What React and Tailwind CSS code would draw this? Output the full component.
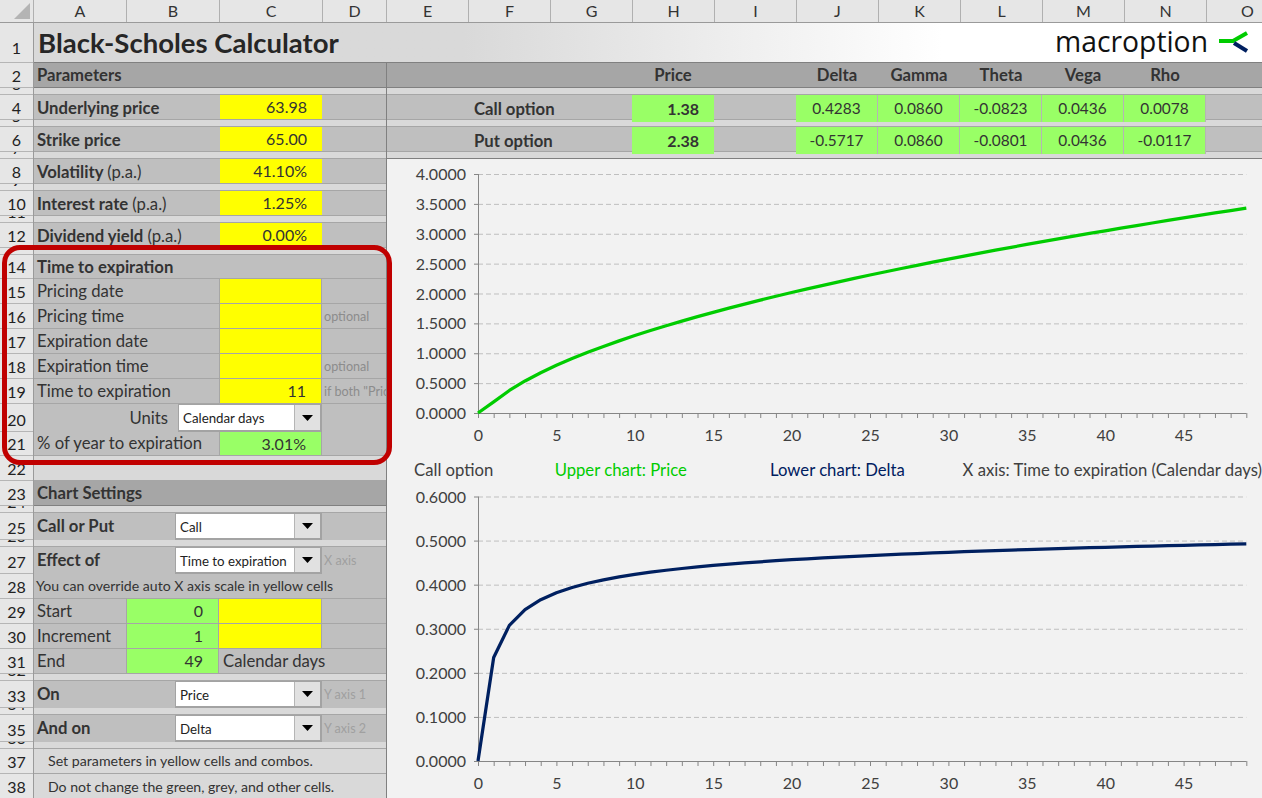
const COLUMNS = [
  ["A", "w-[93px]"],
  ["B", "w-[93px]"],
  ["C", "w-[103px]"],
  ["D", "w-[64px]"],
  ["E", "w-[82px]"],
  ["F", "w-[82px]"],
  ["G", "w-[82px]"],
  ["H", "w-[82px]"],
  ["I", "w-[82px]"],
  ["J", "w-[82px]"],
  ["K", "w-[82px]"],
  ["L", "w-[82px]"],
  ["M", "w-[82px]"],
  ["N", "w-[82px]"],
  ["O", "w-[82px]"],
];

const ROWS = [
  ["1", "h-[40px]"], ["2", "h-[25px]"], ["3", "h-[7px]"], ["4", "h-[25px]"], ["5", "h-[7px]"],
  ["6", "h-[25px]"], ["7", "h-[7px]"], ["8", "h-[25px]"], ["9", "h-[7px]"], ["10", "h-[25px]"],
  ["11", "h-[7px]"], ["12", "h-[25px]"], ["13", "h-[7px]"], ["14", "h-[24px]"], ["15", "h-[25px]"],
  ["16", "h-[25px]"], ["17", "h-[25px]"], ["18", "h-[25px]"], ["19", "h-[25px]"], ["20", "h-[28px]"],
  ["21", "h-[24px]"], ["22", "h-[25px]"], ["23", "h-[25px]"], ["24", "h-[7px]"], ["25", "h-[27px]"],
  ["26", "h-[7px]"], ["27", "h-[27px]"], ["28", "h-[25px]"], ["29", "h-[25px]"], ["30", "h-[25px]"],
  ["31", "h-[25px]"], ["32", "h-[7px]"], ["33", "h-[27px]"], ["34", "h-[7px]"], ["35", "h-[27px]"],
  ["36", "h-[7px]"], ["37", "h-[25px]"], ["38", "h-[25px]"],
];

const GREEKS = [
  { label: "Call option", price: "1.38", values: ["0.4283", "0.0860", "-0.0823", "0.0436", "0.0078"] },
  { label: "Put option", price: "2.38", values: ["-0.5717", "0.0860", "-0.0801", "0.0436", "-0.0117"] },
];

// normal cdf, good enough for a chart
function cdf(x) {
  const t = 1 / (1 + 0.2316419 * Math.abs(x));
  const d = 0.3989423 * Math.exp((-x * x) / 2);
  const p = d * t * (0.3193815 + t * (-0.3565638 + t * (1.781478 + t * (-1.821256 + t * 1.330274))));
  return x > 0 ? 1 - p : p;
}

function blackScholes(days) {
  if (days === 0) return { price: 0, delta: 0 };
  const S = 63.98;
  const K = 65;
  const vol = 0.411;
  const r = 0.0125;
  const T = days / 365;
  const d1 = (Math.log(S / K) + (r + (vol * vol) / 2) * T) / (vol * Math.sqrt(T));
  const d2 = d1 - vol * Math.sqrt(T);
  return {
    price: S * cdf(d1) - K * Math.exp(-r * T) * cdf(d2),
    delta: cdf(d1),
  };
}

const DAYS = Array.from({ length: 50 }, (_, i) => i);

function Chart({ height, top, bottom, max, step, values, color, className }) {
  const x0 = 91;
  const dx = 15.68;
  const y = (v) => bottom - ((bottom - top) * v) / max;
  const gridCount = Math.round(max / step);
  const gridValues = Array.from({ length: gridCount + 1 }, (_, i) => i * step);
  const xEnd = x0 + 49 * dx;

  return (
    <svg width="875" height={height} className={className}>
      {gridValues.map((v) => (
        <g key={v}>
          {v > 0 && (
            <line x1={x0} x2={xEnd} y1={y(v) + 0.5} y2={y(v) + 0.5} stroke="#bfbfbf" strokeDasharray="5 3" />
          )}
          <line x1={x0 - 4} x2={x0} y1={y(v) + 0.5} y2={y(v) + 0.5} stroke="#868686" />
          <text x={x0 - 12} y={y(v) + 6} textAnchor="end" fontSize="16" fill="#404040">
            {v.toFixed(4)}
          </text>
        </g>
      ))}
      <line x1={x0 + 0.5} x2={x0 + 0.5} y1={top} y2={bottom} stroke="#868686" />
      <line x1={x0} x2={xEnd} y1={bottom + 0.5} y2={bottom + 0.5} stroke="#868686" />
      {DAYS.map((d) => (
        <line key={d} x1={x0 + d * dx + 0.5} x2={x0 + d * dx + 0.5} y1={bottom} y2={bottom + 5} stroke="#868686" />
      ))}
      {DAYS.filter((d) => d % 5 === 0).map((d) => (
        <text key={d} x={x0 + d * dx + 0.5} y={bottom + 28} textAnchor="middle" fontSize="16" fill="#404040">
          {d}
        </text>
      ))}
      <polyline
        fill="none"
        stroke={color}
        strokeWidth="3.25"
        strokeLinejoin="round"
        points={values.map((v, i) => `${x0 + i * dx},${y(v)}`).join(" ")}
      />
    </svg>
  );
}

function Combo({ value, width = "w-[147px]" }) {
  return (
    <div className={`${width} h-full flex bg-white border-t border-l border-r-2 border-b-2 border-[#a3a3a3] text-[13.3px] text-[#222]`}>
      <div className="flex-1 flex items-center pl-[4px] pt-[3px] whitespace-nowrap overflow-hidden">{value}</div>
      <div className="w-[26px] bg-[#e1e1e1] border-l border-[#b5b5b5] flex items-center justify-center">
        <svg width="11" height="6" viewBox="0 0 11 6">
          <path d="M0 0h11L5.5 6z" fill="#000" />
        </svg>
      </div>
    </div>
  );
}

function Spacer() {
  return <div className="h-[7px] bg-[#d9d9d9] border-b border-[#a6a6a6]" />;
}

function Section({ children }) {
  return (
    <div className="h-[25px] bg-[#a6a6a6] border-b border-[#808080] flex items-center pl-[3px] pt-[2px] font-bold">
      {children}
    </div>
  );
}

// label + yellow cell + grey D column, rows 4 to 12
function InputRow({ label, hint, value }) {
  return (
    <div className="h-[25px] bg-[#bfbfbf] border-b border-[#a6a6a6] flex items-center">
      <div className="flex-1 pl-[3px] pt-[3px] font-bold">
        {label} {hint && <span className="font-normal">{hint}</span>}
      </div>
      <div className="w-[103px] h-full bg-[#ffff00] border-l border-[#bfbfbf] flex items-center justify-end pr-[15px] text-[16px]">
        {value}
      </div>
      <div className="w-[64px]" />
    </div>
  );
}

function ExpiryRow({ label, value, note }) {
  return (
    <div className="h-[25px] border-b border-[#a6a6a6] flex items-center">
      <div className="flex-1 pl-[3px] pt-[2px]">{label}</div>
      <div className="w-[103px] h-full bg-[#ffff00] border-x border-[#a6a6a6] flex items-center justify-end pr-[15px] text-[16px]">
        {value}
      </div>
      <div className="w-[64px] pl-[2px] pt-[3px] text-[12.6px] text-[#8c8c8c] whitespace-nowrap overflow-hidden">{note}</div>
    </div>
  );
}

function ComboRow({ label, value, note }) {
  return (
    <div className="h-[27px] bg-[#bfbfbf] flex items-center">
      <div className="flex-1 pl-[3px] font-bold">{label}</div>
      <Combo value={value} />
      <div className="w-[64px] pl-[2px] pt-[2px] text-[12.6px] text-[#a0a0a0] whitespace-nowrap">{note}</div>
    </div>
  );
}

function ScaleRow({ label, value, yellow, note }) {
  return (
    <div className="h-[25px] border-b border-[#a6a6a6] flex items-center">
      <div className="w-[92px] pl-[3px] pt-[2px]">{label}</div>
      <div className="w-[93px] h-full bg-[#99ff66] border-x border-[#a6a6a6] flex items-center justify-end pr-[15px] text-[16px]">
        {value}
      </div>
      {yellow ? (
        <div className="w-[103px] h-full bg-[#ffff00] border-r border-[#a6a6a6]" />
      ) : (
        <div className="pl-[4px] pt-[2px] whitespace-nowrap">{note}</div>
      )}
    </div>
  );
}

function GreekRow({ row }) {
  return (
    <div className="h-[25px] bg-[#bfbfbf] border-b border-[#a6a6a6] grid grid-cols-[81px_82px_82px_82px_82px_82px_82px_82px_82px_82px_1fr] items-center">
      <div />
      <div className="text-center pl-[6px] pt-[2px] font-bold whitespace-nowrap">{row.label}</div>
      <div />
      <div className="h-full bg-[#99ff66] flex items-center justify-end pr-[15px] font-bold text-[16px]">{row.price}</div>
      <div />
      {row.values.map((v, i) => (
        <div key={i} className="h-full bg-[#99ff66] border-r border-[#b5b5b5] flex items-center justify-center text-[15.4px]">
          {v}
        </div>
      ))}
      <div />
    </div>
  );
}

export default function App() {
  const prices = DAYS.map((d) => blackScholes(d).price);
  const deltas = DAYS.map((d) => blackScholes(d).delta);

  return (
    <div className="relative w-[1262px] h-[798px] overflow-hidden bg-[#f2f2f2] font-['Lato',sans-serif] text-[16.7px] text-[#333]">
      {/* column letters */}
      <div className="h-[23px] flex bg-[#e6e6e6] border-b border-[#9a9a9a] text-[16px]">
        <div className="w-[34px] shrink-0 border-r border-[#b0b0b0] flex">
          <svg width="33" height="22">
            <path d="M30 3v16H14z" fill="#b4b4b4" />
          </svg>
        </div>
        {COLUMNS.map(([letter, width]) => (
          <div key={letter} className={`${width} shrink-0 border-r border-[#b0b0b0] flex items-center justify-center`}>
            {letter}
          </div>
        ))}
      </div>

      <div className="flex">
        {/* row numbers */}
        <div className="w-[34px] shrink-0 bg-[#e6e6e6] border-r border-[#9a9a9a] text-[16px] text-[#222]">
          {ROWS.map(([n, height]) => (
            <div
              key={n}
              className={`${height} ${n === "1" ? "pb-[3px]" : ""} border-b border-[#b5b5b5] overflow-hidden flex items-end justify-center`}
            >
              {height === "h-[7px]" ? (
                <span className="leading-[7px] -translate-y-[7px]">{n}</span>
              ) : (
                <span className="leading-[22px]">{n}</span>
              )}
            </div>
          ))}
        </div>

        <div className="flex-1 min-w-0">
          {/* title */}
          <div className="h-[40px] flex items-center justify-between border-b border-[#808080] bg-gradient-to-r from-[#d9d9d9] from-[35%] to-white to-[74%] pl-[4px] pr-[12px]">
            <div className="text-[27.5px] font-bold text-[#262626]">Black-Scholes Calculator</div>
            <div className="flex items-center gap-[10px]">
              <span className="text-[28.3px] leading-none mb-[2px] font-medium font-['Open_Sans',sans-serif] text-[#111]">macroption</span>
              <svg width="32" height="22" viewBox="0 0 32 22">
                <path d="M1 10h14L29 2" fill="none" stroke="#00cc00" strokeWidth="4" />
                <path d="M16 12l13 8" fill="none" stroke="#002060" strokeWidth="4" />
              </svg>
            </div>
          </div>

          <div className="flex">
            {/* parameters panel */}
            <div className="w-[353px] shrink-0 h-[735px] bg-[#d9d9d9] border-r border-[#808080]">
              <Section>Parameters</Section>
              <Spacer />
              <InputRow label="Underlying price" value="63.98" />
              <Spacer />
              <InputRow label="Strike price" value="65.00" />
              <Spacer />
              <InputRow label="Volatility" hint="(p.a.)" value="41.10%" />
              <Spacer />
              <InputRow label="Interest rate" hint="(p.a.)" value="1.25%" />
              <Spacer />
              <InputRow label="Dividend yield" hint="(p.a.)" value="0.00%" />
              <Spacer />

              <div className="bg-[#bfbfbf]">
                <div className="h-[24px] border-b border-[#a6a6a6] flex items-center pl-[3px] pt-[2px] font-bold">Time to expiration</div>
                <ExpiryRow label="Pricing date" />
                <ExpiryRow label="Pricing time" note="optional" />
                <ExpiryRow label="Expiration date" />
                <ExpiryRow label="Expiration time" note="optional" />
                <ExpiryRow label="Time to expiration" value="11" note={'if both "Pricing'} />
                <div className="h-[28px] flex items-center">
                  <div className="w-[144px] text-right pr-[10px] pt-[2px]">Units</div>
                  <Combo value="Calendar days" width="w-[144px]" />
                </div>
                <div className="h-[24px] border-b border-[#a6a6a6] flex items-center">
                  <div className="flex-1 pl-[3px]">% of year to expiration</div>
                  <div className="w-[103px] h-full bg-[#99ff66] border-x border-[#a6a6a6] flex items-center justify-end pr-[15px] text-[16px]">
                    3.01%
                  </div>
                  <div className="w-[64px]" />
                </div>
              </div>

              <div className="h-[25px] border-b border-[#a6a6a6]" />
              <Section>Chart Settings</Section>
              <Spacer />
              <ComboRow label="Call or Put" value="Call" />
              <Spacer />
              <div className="bg-[#bfbfbf]">
                <ComboRow label="Effect of" value="Time to expiration" note="X axis" />
                <div className="h-[25px] border-b border-[#a6a6a6] flex items-center pl-[2px] text-[14.1px] whitespace-nowrap">
                  You can override auto X axis scale in yellow cells
                </div>
                <ScaleRow label="Start" value="0" yellow />
                <ScaleRow label="Increment" value="1" yellow />
                <ScaleRow label="End" value="49" note="Calendar days" />
              </div>
              <Spacer />
              <ComboRow label="On" value="Price" note="Y axis 1" />
              <Spacer />
              <ComboRow label="And on" value="Delta" note="Y axis 2" />
              <Spacer />
              <div className="h-[25px] border-b border-[#a6a6a6] flex items-center pl-[14px] text-[14.2px]">
                Set parameters in yellow cells and combos.
              </div>
              <div className="h-[25px] flex items-center pl-[14px] text-[14.1px]">
                Do not change the green, grey, and other cells.
              </div>
            </div>

            {/* results and charts */}
            <div className="flex-1 min-w-0">
              <div className="h-[25px] bg-[#a6a6a6] border-b border-[#808080] grid grid-cols-[81px_82px_82px_82px_82px_82px_82px_82px_82px_82px_1fr] items-center font-bold">
                <div className="col-span-3" />
                <div className="text-center">Price</div>
                <div />
                <div className="text-center">Delta</div>
                <div className="text-center">Gamma</div>
                <div className="text-center">Theta</div>
                <div className="text-center">Vega</div>
                <div className="text-center">Rho</div>
              </div>
              <Spacer />
              <GreekRow row={GREEKS[0]} />
              <Spacer />
              <GreekRow row={GREEKS[1]} />
              <div className="h-[7px] bg-[#d9d9d9] border-b border-[#808080]" />

              <Chart height={296} top={15} bottom={254} max={4} step={0.5} values={prices} color="#00cc00" className="block" />
              <div className="h-[30px] flex items-center pl-[27px] pt-[2px] whitespace-nowrap">
                <div className="w-[141px] text-[#404040]">Call option</div>
                <div className="w-[216px] text-[#00cc00]">Upper chart: Price</div>
                <div className="w-[193px] text-[#002060]">Lower chart: Delta</div>
                <div className="text-[#404040]">X axis: Time to expiration (Calendar days)</div>
              </div>
              <Chart height={313} top={11.5} bottom={276} max={0.6} step={0.1} values={deltas} color="#002060" className="block" />
            </div>
          </div>
        </div>
      </div>

      {/* red highlight drawn over the sheet */}
      <div className="absolute left-[2px] top-[245px] w-[390px] h-[220px] border-[5px] border-[#c00000] rounded-[18px] pointer-events-none" />
    </div>
  );
}
